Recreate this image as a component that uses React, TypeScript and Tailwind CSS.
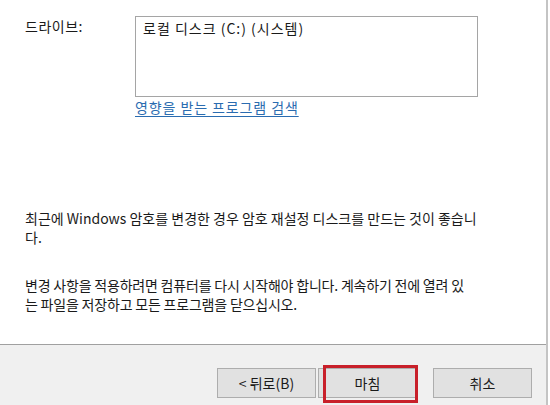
const font = { fontFamily: '"Noto Sans CJK KR", "Noto Sans", sans-serif' }

function WizardButton({ label, outlined }: { label: string; outlined?: boolean }) {
  return (
    <div className="relative">
      <button className="w-[99px] h-[30px] bg-[#e1e1e1] border border-[#adadad] text-[14px] leading-none text-[#1a1a1a]">
        {label}
      </button>
      {outlined && (
        <div className="absolute left-[5px] top-[-3px] w-[95px] h-[38px] border-[3px] border-[#c8202a] pointer-events-none" />
      )}
    </div>
  )
}

export default function App() {
  return (
    <div className="w-[550px] h-[405px] bg-white overflow-hidden" style={font}>
      <div className="w-[548px] h-full border-r-2 border-[#c4c4c4] flex flex-col">
        <div className="h-[344px] pl-[25px] pt-[16px] text-[14px] leading-[19px] text-[#1a1a1a]">
          <div className="flex">
            <div className="w-[110px] pt-[1px] tracking-[0.5px]">드라이브:</div>
            <div>
              <div className="w-[343px] h-[81px] border border-[#a5a5a5] pl-[7px] pt-[2px] tracking-[1px]">
                로컬 디스크 (C:) (시스템)
              </div>
              <a className="block mt-[1px] text-[#2a6cb0] underline underline-offset-[3px] tracking-[0.9px] cursor-pointer">
                영향을 받는 프로그램 검색
              </a>
            </div>
          </div>

          <p className="mt-[92px]">
            최근에 Windows 암호를 변경한 경우 암호 재설정 디스크를 만드는 것이 좋습니
            <br />
            다.
          </p>
          <p className="mt-[29px] tracking-[-0.2px]">
            변경 사항을 적용하려면 컴퓨터를 다시 시작해야 합니다. 계속하기 전에 열려 있
            <br />
            는 파일을 저장하고 모든 프로그램을 닫으십시오.
          </p>
        </div>

        <div className="flex-1 bg-[#f0f0f0] border-t border-[#a0a0a0] flex justify-end items-start pt-[23px] pr-[14px]">
          <div className="flex gap-[2px]">
            <WizardButton label="< 뒤로(B)" />
            <WizardButton label="마침" outlined />
          </div>
          <div className="ml-[16px]">
            <WizardButton label="취소" />
          </div>
        </div>
      </div>
    </div>
  )
}
